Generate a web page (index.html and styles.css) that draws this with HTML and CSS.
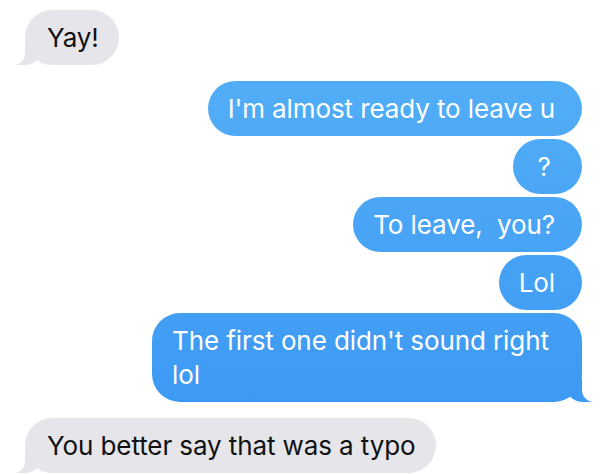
FILE: index.html
```html
<!DOCTYPE html>
<html lang="en">
<head>
    <meta charset="UTF-8">
    <meta name="viewport" content="width=device-width, initial-scale=1.0">
    <title>Messages</title>
    <link rel="stylesheet" href="styles.css">
</head>
<body>
    <div class="chat">
        <div class="bubble received tail">Yay!</div>

        <div class="group">
            <div class="bubble sent">I'm almost ready to leave u</div>
            <div class="bubble sent short">?</div>
            <div class="bubble sent">To leave,&nbsp; you?</div>
            <div class="bubble sent">Lol</div>
            <div class="bubble sent tail">The first one didn't sound right lol</div>
        </div>

        <div class="bubble received tail">You better say that was a typo</div>
    </div>
</body>
</html>
```

FILE: styles.css
```css
body {
    margin: 0;
    padding: 0;
    background-color: #ffffff;
    font-family: Inter, "Liberation Sans", Arial, sans-serif;
    overflow: hidden;
}
.chat {
    display: flex;
    flex-direction: column;
    gap: 16px;
    padding: 10px 18px 0 25px;
}
.group {
    display: flex;
    flex-direction: column;
    align-items: flex-end;
    gap: 3px;
}
.bubble {
    position: relative;
    max-width: 430px;
    box-sizing: border-box;
    padding: 10.5px 27px 10.5px 20px;
    border-radius: 28px;
    font-size: 26px;
    line-height: 34px;
    letter-spacing: -0.1px;
}
.received {
    align-self: flex-start;
    padding: 10.5px 20px 10.5px 22px;
    background-color: #e5e5ea;
    color: #111111;
}
.sent {
    background: linear-gradient(#58b2f8, #3895f2) fixed;
    color: #ffffff;
}
.short {
    min-width: 69px;
    text-align: center;
}
/* bubble tails */
.tail::before,
.tail::after {
    content: "";
    position: absolute;
    bottom: 0;
    height: 24px;
}
.sent.tail::before {
    right: -9px;
    width: 24px;
    background: linear-gradient(#58b2f8, #3895f2) fixed;
    border-bottom-left-radius: 16px 14px;
}
.sent.tail::after {
    right: -24px;
    width: 24px;
    background-color: #ffffff;
    border-bottom-left-radius: 12px;
}
.received.tail::before {
    left: -8px;
    width: 24px;
    background-color: #e5e5ea;
    border-bottom-right-radius: 16px 14px;
}
.received.tail::after {
    left: -24px;
    width: 24px;
    background-color: #ffffff;
    border-bottom-right-radius: 12px;
}
```
